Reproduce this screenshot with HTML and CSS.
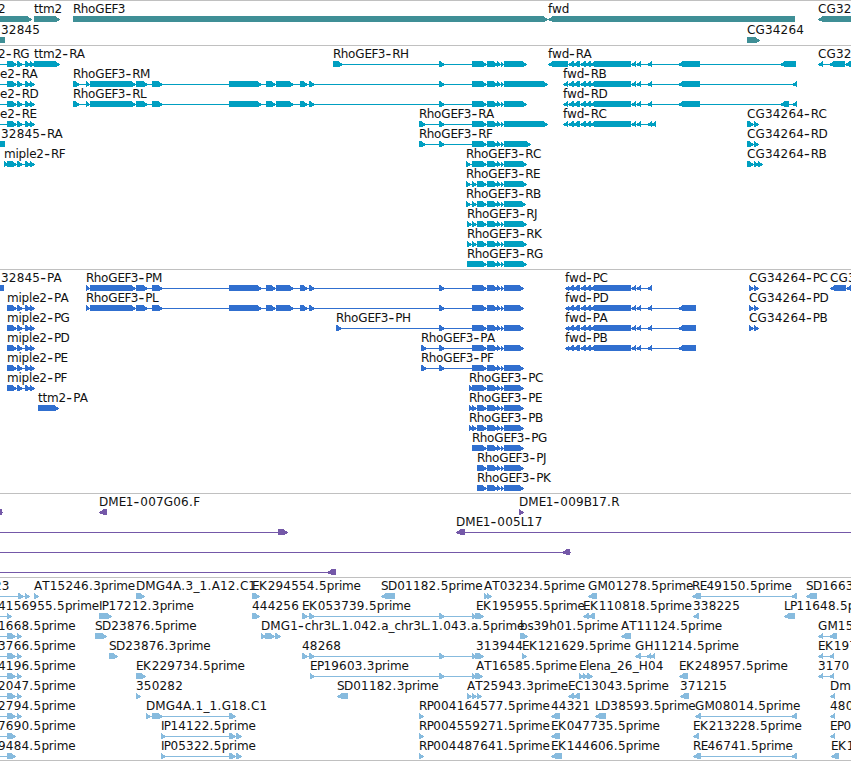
FILE: index.html
```html
<!DOCTYPE html>
<html lang="en">
  <head>
    <meta charset="UTF-8" />
    <title>Genome Browser</title>
    <link rel="stylesheet" href="styles.css">
  </head>
  <body>
    <main class="browser">
      <section class="track gene" id="gene"></section>
      <section class="track transcript" id="transcript"></section>
      <section class="track protein" id="protein"></section>
      <section class="track bac" id="bac"></section>
      <section class="track est" id="est"></section>
    </main>
    <script src="tracks.js"></script>
  </body>
</html>
```
FILE: styles.css
```css
* {
  margin: 0;
  padding: 0;
  box-sizing: border-box;
}

body {
  background-color: #fff;
  overflow: hidden;
}

.browser {
  width: 851px;
  border-bottom: 1px solid #c0c0c0;
}

.track {
  border-top: 1px solid #c0c0c0;
  overflow: hidden;
}

.track svg {
  display: block;
  width: 100%;
  height: 100%;
}

.track text {
  font-family: "DejaVu Sans", sans-serif;
  font-size: 12px;
  font-kerning: none;
  letter-spacing: 0.2px;
  fill: #111;
}

.track .narrow {
  letter-spacing: -0.7px;
}

.track .wide {
  letter-spacing: 0.1px;
}

.track .k {
  letter-spacing: 0.9px;
}

.track .lower {
  letter-spacing: -0.2px;
}

.track .dot {
  letter-spacing: 0.4px;
}

.track .dash {
  font-size: 16px;
  letter-spacing: 1px;
  baseline-shift: -1px;
}

.track path {
  shape-rendering: crispEdges;
}

.gene {
  height: 45px;
  fill: #3f8f96;
}

.transcript {
  height: 224px;
  fill: #009fc1;
}

.protein {
  height: 224px;
  fill: #306fcf;
}

.bac {
  height: 84px;
  fill: #7458a8;
}

.est {
  height: 183px;
  fill: #87bbde;
}
```
FILE: tracks.js
```js
// feature: [label, label x, strand, "start,end start,end ..."]
const mip = "7,17 17,23 25,31 30,35";
const mipLine = "-9,-5 " + mip;
const rhoMid = "472,487 487,498 497,501 501,504 504,";
const rhoShort = "477,487 487,498 497,501 501,504 504,";
const rhoLong = "86,90 90,136 136,148 152,163 229,262 266,276 276,294 300,308 309,315 439,445 " + rhoMid;
const fwd = "568,574 573,580 580,586 585,591 590,631 631,636 636,641 647,652";
const estLong = "302,308 309,315 439,445 472,477";
const estLeft = "-9,-5 7,16 17,22";

const tracks = {
  gene: [
    [
      ["2", -2, "+", "-35,32"],
      ["ttm2", 34, "+", "34,60"],
      ["RhoGEF3", 73, "+", "73,548"],
      ["fwd", 548, "-", "548,795"],
      ["CG32", 818, "-", "818,900"],
    ],
    [
      ["32845", 1, "-", "-20,5"],
      ["CG34264", 747, "+", "747,760"],
    ],
  ],
  transcript: [
    [
      ["2-RG", -2, "+", mipLine],
      ["ttm2-RA", 34, "+", "34,60"],
      ["RhoGEF3-RH", 333, "+", "333,343 439,445 " + rhoMid + "527"],
      ["fwd-RA", 548, "-", "548,568 " + fwd + " 678,700 780,796"],
      ["CG32", 818, "-", "818,823 829,845 845,860"],
    ],
    [
      ["e2-RA", 0, "+", mipLine],
      ["RhoGEF3-RM", 73, "+", "73,80 " + rhoLong + "548"],
      ["fwd-RB", 563, "-", "563,568 " + fwd + " 678,700 792,797"],
    ],
    [
      ["e2-RD", 0, "+", mipLine],
      ["RhoGEF3-RL", 73, "+", "73,80 " + rhoLong + "527"],
      ["fwd-RD", 563, "-", "563,568 " + fwd + " 678,700 780,789 792,797"],
    ],
    [
      ["e2-RE", 0, "+", mipLine],
      ["RhoGEF3-RA", 419, "+", "419,426 439,445 " + rhoMid + "548"],
      ["fwd-RC", 563, "-", "563,568 " + fwd + " 651,656"],
      ["CG34264-RC", 747, "+", "747,754 754,759"],
    ],
    [
      ["32845-RA", 1, "-", "-20,5"],
      ["RhoGEF3-RF", 419, "+", "419,426 439,445 " + rhoMid + "531"],
      ["CG34264-RD", 747, "+", "747,754 754,759"],
    ],
    [
      ["miple2-RF", 4, "+", "4,8 " + mip],
      ["RhoGEF3-RC", 466, "+", "466,471 " + rhoMid + "527"],
      ["CG34264-RB", 747, "+", "747,754 754,759 758,763"],
    ],
    [["RhoGEF3-RE", 466, "+", "466,471 472,477 " + rhoShort + "527"]],
    [["RhoGEF3-RB", 466, "+", "466,471 472,477 " + rhoShort + "526"]],
    [["RhoGEF3-RJ", 467, "+", "467,472 472,477 " + rhoShort + "527"]],
    [["RhoGEF3-RK", 467, "+", "467,472 472,477 " + rhoShort + "527"]],
    [["RhoGEF3-RG", 467, "+", "467,472 467,487 " + rhoShort + "527"]],
  ],
  protein: [
    [
      ["32845-PA", 1, "-", "-20,4"],
      ["RhoGEF3-PM", 86, "+", rhoLong + "524"],
      ["fwd-PC", 565, "-", "565,569 " + fwd],
      ["CG34264-PC", 749, "+", "749,754 754,759"],
      ["CG3", 830, "-", "830,846 846,860"],
    ],
    [
      ["miple2-PA", 7, "+", mip],
      ["RhoGEF3-PL", 86, "+", rhoLong + "524"],
      ["fwd-PD", 565, "-", "565,569 " + fwd + " 678,696"],
      ["CG34264-PD", 749, "+", "749,754 754,759"],
    ],
    [
      ["miple2-PG", 7, "+", mip],
      ["RhoGEF3-PH", 336, "+", "336,342 439,445 " + rhoMid + "524"],
      ["fwd-PA", 565, "-", "565,569 " + fwd + " 678,696"],
      ["CG34264-PB", 749, "+", "749,754 754,759"],
    ],
    [
      ["miple2-PD", 7, "+", mip],
      ["RhoGEF3-PA", 421, "+", "421,427 439,445 " + rhoMid + "524"],
      ["fwd-PB", 565, "-", "565,569 " + fwd + " 678,696"],
    ],
    [
      ["miple2-PE", 7, "+", mip],
      ["RhoGEF3-PF", 421, "+", "421,427 439,445 " + rhoMid + "524"],
    ],
    [
      ["miple2-PF", 7, "+", mip],
      ["RhoGEF3-PC", 469, "+", "469,473 " + rhoMid + "524"],
    ],
    [
      ["ttm2-PA", 38, "+", "38,59"],
      ["RhoGEF3-PE", 469, "+", "469,473 472,477 " + rhoShort + "524"],
    ],
    [["RhoGEF3-PB", 469, "+", "469,473 472,477 " + rhoShort + "524"]],
    [["RhoGEF3-PG", 472, "+", rhoMid + "524"]],
    [["RhoGEF3-PJ", 477, "+", rhoShort + "524"]],
    [["RhoGEF3-PK", 477, "+", rhoShort + "524"]],
  ],
  bac: [
    [
      ["", 0, "-", "-6,2 2,3"],
      ["DME1-007G06.F", 99, "-", "99,107"],
      ["DME1-009B17.R", 519, "+", "519,524"],
    ],
    [
      ["", 0, "+", "-9,-5 278,288"],
      ["DME1-005L17", 456, "-", "456,465 900,910"],
    ],
    [["", 0, "-", "-9,-5 562,570 570,571"]],
    [["", 0, "-", "-9,-5 327,336"]],
  ],
  est: [
    [
      ["23", -6, "+", "-9,-5 18,24 25,30"],
      ["AT15246.3prime", 34, "+", "34,39"],
      ["DMG4A.3_1.A12.C1", 136, "+", "136,145"],
      ["EK294554.5prime", 252, "+", "252,260"],
      ["SD01182.5prime", 381, "-", "381,395"],
      ["AT03234.5prime", 484, "+", "484,489 487,492"],
      ["GM01278.5prime", 588, "-", "588,597"],
      ["RE49150.5prime", 692, "-", "692,701 791,797"],
      ["SD1663", 806, "-", "806,817"],
    ],
    [
      ["4156955.5prime", -2, "+", "-9,-5 7,12"],
      ["IP17212.3prime", 99, "+", "99,112"],
      ["444256", 252, "+", "252,260"],
      ["EK053739.5prime", 302, "+", estLong],
      ["EK195955.5prime", 476, "+", "475,484"],
      ["EK110818.5prime", 583, "-", "583,589 588,595"],
      ["338225", 693, "-", "693,699"],
      ["LP11648.5p", 784, "-", "784,795"],
    ],
    [
      ["1668.5prime", -2, "+", estLeft],
      ["SD23876.5prime", 95, "+", "95,107"],
      ["DMG1-chr3L.1.042.a_chr3L.1.043.a.5prime", 261, "+", "261,266 265,275 275,281"],
      ["bs39h01.5prime", 520, "+", "520,528"],
      ["AT11124.5prime", 621, "-", "621,631"],
      ["GM15", 818, "-", "818,823 829,837"],
    ],
    [
      ["3766.5prime", -2, "+", estLeft],
      ["SD23876.3prime", 109, "+", "109,118"],
      ["48268", 302, "+", estLong],
      ["313944", 476, "+", "475,484"],
      ["EK121629.5prime", 522, "+", "522,527"],
      ["GH11214.5prime", 635, "-", "635,641 646,651 650,655"],
      ["EK197", 818, "-", "818,823 829,834"],
    ],
    [
      ["4196.5prime", -2, "+", estLeft],
      ["EK229734.5prime", 136, "+", "136,146"],
      ["EP19603.3prime", 310, "+", "310,315 439,445 472,477"],
      ["AT16585.5prime", 476, "+", "475,483"],
      ["Elena_26_H04", 579, "+", "579,584 583,588 587,593"],
      ["EK248957.5prime", 679, "-", "679,688"],
      ["3170", 818, "-", "818,823 829,834"],
    ],
    [
      ["2047.5prime", -2, "+", estLeft],
      ["350282", 136, "+", "136,141"],
      ["SD01182.3prime", 337, "-", "337,348"],
      ["AT25943.3prime", 467, "+", "467,472 472,477 477,482"],
      ["EC13043.5prime", 568, "-", "568,574 573,580"],
      ["371215", 680, "-", "680,689"],
      ["Dm", 830, "-", "830,835"],
    ],
    [
      ["2794.5prime", -2, "+", estLeft],
      ["DMG4A.1_1.G18.C1", 146, "+", "146,151 152,163 229,236"],
      ["RP004164577.5prime", 419, "+", "419,424"],
      ["44321", 551, "-", "551,560"],
      ["LD38593.5prime", 595, "-", "595,606"],
      ["GM08014.5prime", 695, "-", "695,701 791,797"],
      ["480", 830, "-", "830,835"],
    ],
    [
      ["7690.5prime", -2, "+", "-9,-5 7,16"],
      ["IP14122.5prime", 161, "+", "161,166 229,236 236,242"],
      ["RP004559271.5prime", 419, "+", "419,424"],
      ["EK047735.5prime", 551, "-", "551,560"],
      ["EK213228.5prime", 693, "-", "693,699"],
      ["EP0", 830, "-", "830,835"],
    ],
    [
      ["9484.5prime", -2, "+", "-9,-5 7,16"],
      ["IP05322.5prime", 161, "+", "161,166 229,236 236,242"],
      ["RP004487641.5prime", 419, "+", "419,424"],
      ["EK144606.5prime", 551, "-", "551,562"],
      ["RE46741.5prime", 693, "-", "693,701 791,797"],
      ["EK1", 831, "-", "831,839"],
    ],
  ],
};

function glyphClass(part) {
  if (part === "-") return "dash";
  if (part === ".") return "dot";
  if (part === "K") return "k";
  if (/[ACDGHMT]/.test(part)) return "wide";
  return part < "a" ? "narrow" : "lower";
}

function labelSpans(label) {
  return label.replace(/K|[ACDGHMT]+|[A-Z]|[a-z]+|-|\./g, function (part) {
    return `<tspan class="${glyphClass(part)}">${part}</tspan>`;
  });
}

function exonPath(start, end, strand, y) {
  const dir = strand === "+" ? 1 : -1;
  const tail = strand === "+" ? start : end;
  const head = strand === "+" ? end : start;
  const neck = head - dir * Math.min(5, end - start);
  const mid = head - dir * Math.min(2, end - start);
  return (
    `M${tail} ${y}H${neck}L${mid} ${y + 2}L${head} ${y + 3}` +
    `v1L${mid} ${y + 5}L${neck} ${y + 6}H${tail}z`
  );
}

function drawTrack(id) {
  const pitch = id === "gene" ? 21 : 20;
  let shapes = "";
  let labels = "";

  tracks[id].forEach(function (row, i) {
    const y = 15 + i * pitch;
    row.forEach(function ([label, x, strand, exonText]) {
      const exons = exonText.split(" ").map((e) => e.split(",").map(Number));
      const first = exons[0][0];
      const last = exons[exons.length - 1][1];
      if (exons.length > 1) {
        shapes += `<path d="M${first} ${y + 3}H${last}v1H${first}z"/>`;
      }
      exons.forEach(function ([start, end]) {
        shapes += `<path d="${exonPath(start, end, strand, y)}"/>`;
      });
      labels += `<text x="${x}" y="${y - 3}">${labelSpans(label)}</text>`;
    });
  });

  document.getElementById(id).innerHTML = `<svg>${shapes}${labels}</svg>`;
}

Object.keys(tracks).forEach(drawTrack);
```
